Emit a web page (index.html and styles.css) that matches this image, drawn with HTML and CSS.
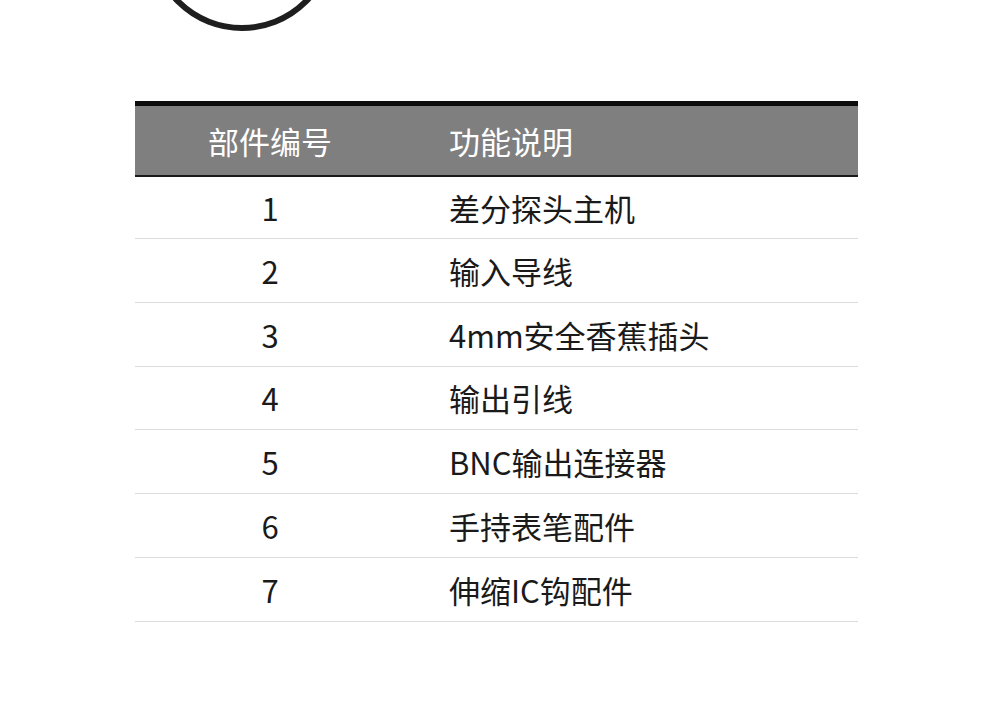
FILE: index.html
```html
<!DOCTYPE html>
<html lang="zh-CN">
<head>
<meta charset="utf-8">
<title>部件说明</title>
<link rel="stylesheet" href="styles.css">
</head>
<body>
<div class="page">
  <svg class="ring" width="990" height="40" viewBox="0 0 990 40" aria-hidden="true">
    <circle cx="242" cy="-62" r="90" fill="none" stroke="#1e1e1e" stroke-width="6"/>
  </svg>
  <div class="table">
    <div class="head">
      <div class="c1">部件编号</div>
      <div class="c2">功能说明</div>
    </div>
    <div class="row first"><div class="c1">1</div><div class="c2">差分探头主机</div></div>
    <div class="row"><div class="c1">2</div><div class="c2">输入导线</div></div>
    <div class="row"><div class="c1">3</div><div class="c2">4mm安全香蕉插头</div></div>
    <div class="row"><div class="c1">4</div><div class="c2">输出引线</div></div>
    <div class="row"><div class="c1">5</div><div class="c2">BNC输出连接器</div></div>
    <div class="row"><div class="c1">6</div><div class="c2">手持表笔配件</div></div>
    <div class="row"><div class="c1">7</div><div class="c2">伸缩IC钩配件</div></div>
  </div>
</div>
</body>
</html>
```

FILE: styles.css
```css
html, body {
  margin: 0;
  padding: 0;
  background: #ffffff;
}
body {
  font-family: "Noto Sans CJK SC", "Noto Sans", sans-serif;
  color: #1a1a1a;
  width: 990px;
  height: 709px;
  overflow: hidden;
}
.ring {
  display: block;
}
.table {
  width: 723px;
  margin: 61px 0 0 135px;
  font-size: 31px;
}
.head, .row {
  display: grid;
  grid-template-columns: 270px 1fr;
  align-items: center;
}
.head {
  height: 69px;
  background: #7f7f7f;
  border-top: 5px solid #0c0c0c;
  border-bottom: 2px solid #1a1a1a;
  color: #ffffff;
}
.row {
  height: 62.75px;
  border-bottom: 1px solid #dcdcdc;
}
.row.first {
  height: 61px;
}
.c1 {
  text-align: center;
}
.c2 {
  padding-left: 44px;
}
```
